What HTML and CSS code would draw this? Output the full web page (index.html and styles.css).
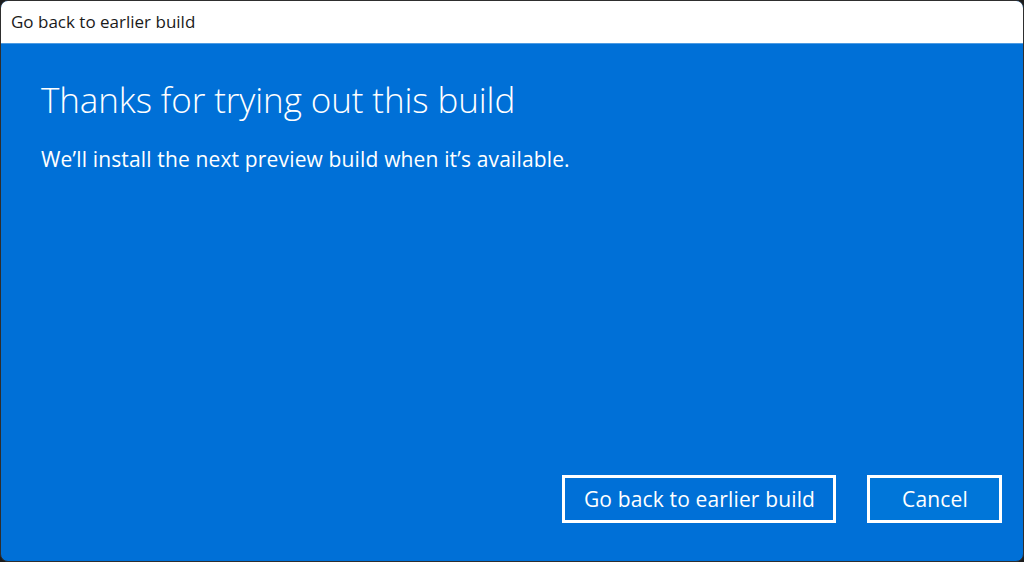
FILE: index.html
```html
<!DOCTYPE html>
<html>
<head>
<meta charset="utf-8">
<link rel="stylesheet" href="styles.css">
</head>
<body>
<div class="window">
  <div class="titlebar">Go back to earlier build</div>
  <div class="content">
    <h1 class="heading">Thanks for trying out this build</h1>
    <p class="subtitle">We’ll install the next preview build when it’s available.</p>
    <div class="spacer"></div>
    <div class="actions">
      <button class="btn btn-primary">Go back to earlier build</button>
      <button class="btn btn-cancel">Cancel</button>
    </div>
  </div>
</div>
</body>
</html>
```
FILE: styles.css
```css
html, body {
  margin: 0;
  padding: 0;
  width: 1024px;
  height: 562px;
  background: #1c1c1c;
  overflow: hidden;
}
.window {
  box-sizing: border-box;
  width: 1024px;
  height: 562px;
  border: 1px solid #2e2e2e;
  border-radius: 8px;
  overflow: hidden;
  display: flex;
  flex-direction: column;
  font-family: "Open Sans", "Noto Sans", sans-serif;
  background: #0070d7;
}
.titlebar {
  box-sizing: border-box;
  height: 43px;
  flex: none;
  background: #ffffff;
  color: #1a1a1a;
  font-size: 17px;
  display: flex;
  align-items: center;
  padding-left: 10px;
  padding-bottom: 1px;
  border-bottom: 1px solid #4c9be3;
}
.content {
  flex: 1;
  display: flex;
  flex-direction: column;
  padding: 30px 21px 38px 40px;
  color: #ffffff;
}
.heading {
  margin: 0;
  font-weight: 300;
  font-size: 35px;
  line-height: 52px;
  letter-spacing: -0.1px;
}
.subtitle {
  margin: 19px 0 0;
  font-size: 21px;
  line-height: 28px;
  letter-spacing: 0.15px;
}
.spacer { flex: 1; }
.actions {
  display: flex;
  justify-content: flex-end;
  gap: 31px;
}
.btn {
  box-sizing: border-box;
  height: 48px;
  border: 3px solid #ffffff;
  background: transparent;
  color: #ffffff;
  font-family: "Open Sans", "Noto Sans", sans-serif;
  font-size: 21px;
  letter-spacing: 0.15px;
  padding: 0 0 0 1px;
  cursor: pointer;
}
.btn-primary { width: 274px; }
.btn-cancel { width: 135px; background: #0076d9; }
```
